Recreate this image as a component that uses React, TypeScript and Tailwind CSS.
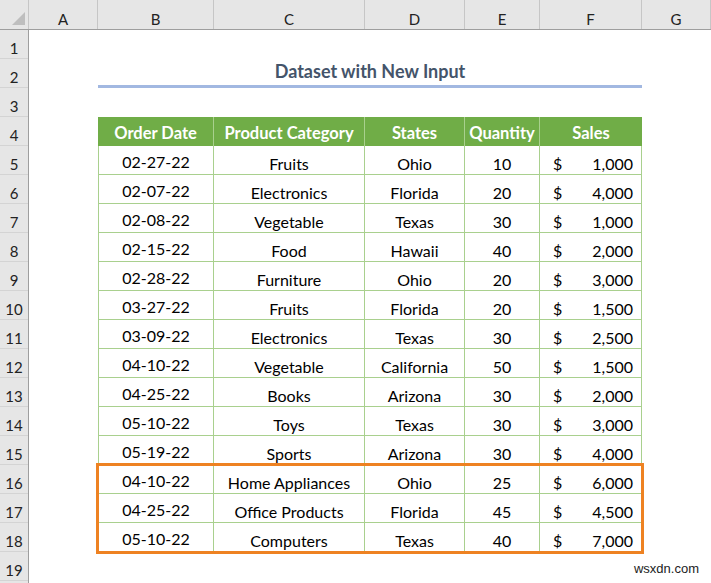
import React from "react";

const cols = ["A", "B", "C", "D", "E", "F", "G"];
const colW = ["w-[69px]", "w-[116px]", "w-[151px]", "w-[100px]", "w-[75px]", "w-[102px]", "w-[69px]"];

const data: [string, string, string, string, string][] = [
  ["02-27-22", "Fruits", "Ohio", "10", "1,000"],
  ["02-07-22", "Electronics", "Florida", "20", "4,000"],
  ["02-08-22", "Vegetable", "Texas", "30", "1,000"],
  ["02-15-22", "Food", "Hawaii", "40", "2,000"],
  ["02-28-22", "Furniture", "Ohio", "20", "3,000"],
  ["03-27-22", "Fruits", "Florida", "20", "1,500"],
  ["03-09-22", "Electronics", "Texas", "30", "2,500"],
  ["04-10-22", "Vegetable", "California", "50", "1,500"],
  ["04-25-22", "Books", "Arizona", "30", "2,000"],
  ["05-10-22", "Toys", "Texas", "30", "3,000"],
  ["05-19-22", "Sports", "Arizona", "30", "4,000"],
  ["04-10-22", "Home Appliances", "Ohio", "25", "6,000"],
  ["04-25-22", "Office Products", "Florida", "45", "4,500"],
  ["05-10-22", "Computers", "Texas", "40", "7,000"],
];

function DataRow({ r }: { r: [string, string, string, string, string] }) {
  const cell = "h-[29px] border-b border-r border-[#A9D08E] flex justify-center text-[16px] text-black";
  return (
    <div className="flex">
      <div className={`${cell} w-[116px] border-l pt-[4px] leading-[23px]`}>{r[0]}</div>
      <div className={`${cell} w-[151px] pt-[6px] leading-[23px]`}>{r[1]}</div>
      <div className={`${cell} w-[100px] pt-[6px] leading-[23px]`}>{r[2]}</div>
      <div className={`${cell} w-[75px] pt-[6px] leading-[23px]`}>{r[3]}</div>
      <div className="h-[29px] border-b border-r border-[#A9D08E] flex justify-between w-[102px] pl-[13px] pr-[8px] pt-[6px] leading-[23px] text-[16px] text-black">
        <span>$</span>
        <span>{r[4]}</span>
      </div>
    </div>
  );
}

export default function App() {
  const rowNums = Array.from({ length: 19 }, (_, i) => i + 1);
  return (
    <div className="w-[711px] h-[583px] overflow-hidden bg-white relative" style={{ fontFamily: "Lato, 'Open Sans', sans-serif" }}>
      {/* column headers */}
      <div className="flex h-[30px] bg-[#E6E6E6] border-b border-[#9E9E9E]">
        <div className="w-[29px] h-full border-r border-[#C6C6C6] flex items-end justify-end pr-[3px] pb-[4px]">
          <svg width="13" height="13" viewBox="0 0 13 13">
            <polygon points="13,0 13,13 0,13" fill="#BEBEBE" />
          </svg>
        </div>
        {cols.map((c, i) => (
          <div
            key={c}
            className={`${colW[i]} h-full border-r border-[#C6C6C6] flex justify-center pt-[9px] text-[15px] leading-[20px] text-[#222]`}
          >
            {c}
          </div>
        ))}
      </div>

      <div className="flex">
        {/* row headers */}
        <div className="w-[29px] flex flex-col bg-[#E6E6E6] border-r border-[#9E9E9E]">
          {rowNums.map((n) => (
            <div key={n} className="h-[29px] shrink-0 border-b border-[#D4D4D4] flex justify-center pt-[8px] leading-[20px] text-[15px] text-[#222]">
              {n}
            </div>
          ))}
          <div className="h-[29px] shrink-0" />
        </div>

        {/* column A */}
        <div className="w-[69px]" />

        {/* B-F block */}
        <div className="w-[544px] flex flex-col">
          <div className="h-[29px]" />
          <div className="h-[29px] border-b-[3px] border-[#A2B8E1] flex justify-center items-end pb-[3px] text-[18px] font-bold text-[#44546A] leading-[22px]">
            Dataset with New Input
          </div>
          <div className="h-[29px]" />
          <div className="flex h-[29px] bg-[#70AD47] text-white font-bold text-[16.5px] leading-[22px]">
            <div className="w-[116px] border-r border-[#A9D08E] flex justify-center pt-[5px]">Order Date</div>
            <div className="w-[151px] border-r border-[#A9D08E] flex justify-center pt-[5px]">Product Category</div>
            <div className="w-[100px] border-r border-[#A9D08E] flex justify-center pt-[5px]">States</div>
            <div className="w-[75px] border-r border-[#A9D08E] flex justify-center pt-[5px]">Quantity</div>
            <div className="w-[102px] flex justify-center pt-[5px]">Sales</div>
          </div>
          {data.slice(0, 11).map((r, i) => (
            <DataRow key={i} r={r} />
          ))}
          <div className="outline-[3px] outline-solid outline-[#EE8222] -outline-offset-1">
            {data.slice(11).map((r, i) => (
              <DataRow key={i} r={r} />
            ))}
          </div>
        </div>

        {/* column G */}
        <div className="w-[69px]" />
      </div>

      <div className="absolute right-[12px] bottom-[5px] text-[13px] text-[#222]" style={{ fontFamily: "'Liberation Sans', sans-serif" }}>
        wsxdn.com
      </div>
    </div>
  );
}
